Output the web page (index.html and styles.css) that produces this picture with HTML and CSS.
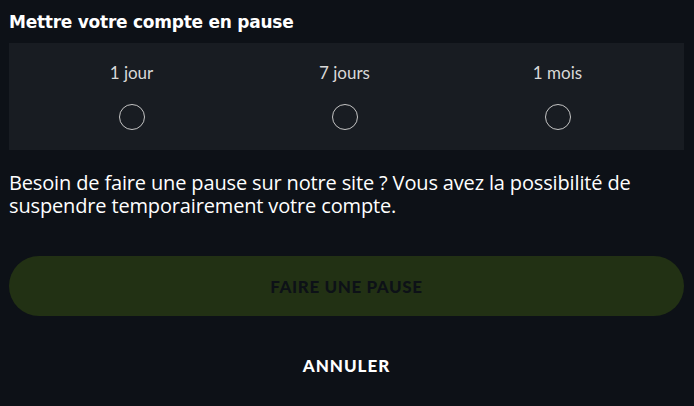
FILE: index.html
```html
<!DOCTYPE html>
<html lang="fr">
<head>
    <meta charset="UTF-8">
    <meta name="viewport" content="width=device-width, initial-scale=1.0">
    <title>Mettre votre compte en pause</title>
    <link rel="stylesheet" href="styles.css">
</head>
<body>

<div class="pause-box">
    <h2 class="pause-title">Mettre votre compte en pause</h2>

    <div class="pause-options">
        <label class="option">
            <span class="option-label">1 jour</span>
            <input type="radio" name="duration" value="1d">
            <span class="radio"></span>
        </label>
        <label class="option">
            <span class="option-label">7 jours</span>
            <input type="radio" name="duration" value="7d">
            <span class="radio"></span>
        </label>
        <label class="option">
            <span class="option-label">1 mois</span>
            <input type="radio" name="duration" value="1m">
            <span class="radio"></span>
        </label>
    </div>

    <p class="pause-text">Besoin de faire une pause sur notre site ? Vous avez la possibilité de suspendre temporairement votre compte.</p>

    <button class="pause-btn" disabled>Faire une pause</button>
    <button class="cancel-btn">Annuler</button>
</div>

</body>
</html>
```

FILE: styles.css
```css
* {
    box-sizing: border-box;
    margin: 0;
    padding: 0;
}
body {
    background-color: #0d1117;
    color: #fff;
    font-family: "Lato", Arial, sans-serif;
}
.pause-box {
    padding: 9px 10px 0 9px;
    display: flex;
    flex-direction: column;
}
.pause-title {
    font-family: "DejaVu Sans", sans-serif;
    font-size: 17px;
    font-weight: bold;
    line-height: 26px;
    letter-spacing: -0.25px;
    margin-bottom: 8px;
}
.pause-options {
    background-color: #181c22;
    display: grid;
    grid-template-columns: repeat(3, 1fr);
    padding: 19px 20px 20px 16px;
}
.option {
    display: flex;
    flex-direction: column;
    align-items: center;
    gap: 20px;
    cursor: pointer;
}
.option-label {
    font-size: 17px;
    line-height: 22px;
    color: #d8d8d8;
}
.option input {
    display: none;
}
.radio {
    width: 26px;
    height: 26px;
    border: 1.5px solid #c4c4c4;
    border-radius: 50%;
}
.option input:checked + .radio {
    background-color: #b2e34a;
}
.pause-text {
    margin-top: 21px;
    font-family: "Open Sans", sans-serif;
    font-size: 20px;
    line-height: 23px;
    letter-spacing: -0.15px;
    color: #fff;
}
.pause-btn {
    margin-top: 39px;
    height: 60px;
    border: none;
    border-radius: 30px;
    background-color: #223114;
    color: #0d1117;
    font-family: "Lato", sans-serif;
    font-size: 17px;
    font-weight: 900;
    letter-spacing: 0.6px;
    text-transform: uppercase;
}
.cancel-btn {
    margin-top: 29px;
    height: 40px;
    background: none;
    border: none;
    color: #fff;
    font-family: "Lato", sans-serif;
    font-size: 17px;
    font-weight: 900;
    letter-spacing: 1px;
    text-transform: uppercase;
    cursor: pointer;
}
```
